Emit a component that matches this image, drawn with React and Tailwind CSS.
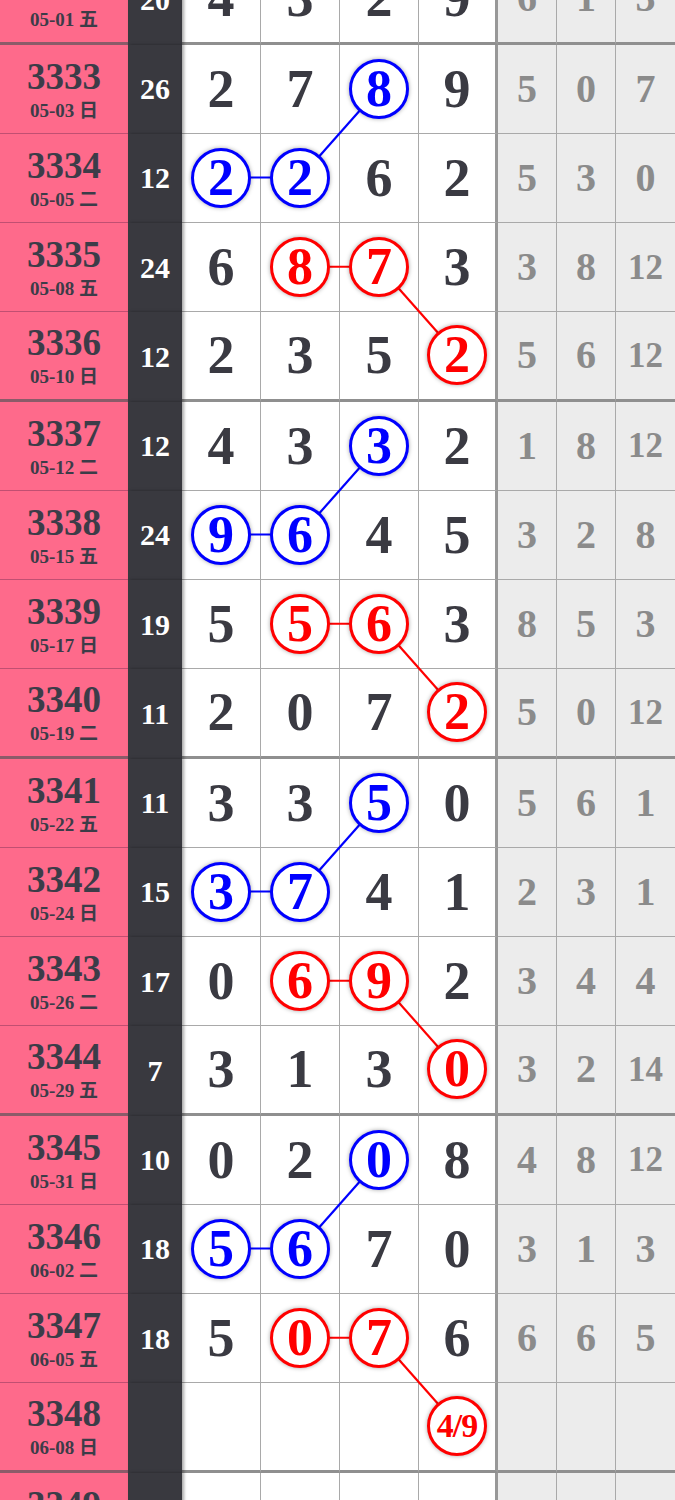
import React from 'react';

const SERIF = { fontFamily: '"Liberation Serif", "Noto Sans CJK SC", serif' };

const rows = [
  { n: 3332, d: '05-01 五', s: '20', v: ['4', '3', '2', '9'], g: ['6', '1', '3'] },
  { n: 3333, d: '05-03 日', s: '26', v: ['2', '7', '8', '9'], g: ['5', '0', '7'] },
  { n: 3334, d: '05-05 二', s: '12', v: ['2', '2', '6', '2'], g: ['5', '3', '0'] },
  { n: 3335, d: '05-08 五', s: '24', v: ['6', '8', '7', '3'], g: ['3', '8', '12'] },
  { n: 3336, d: '05-10 日', s: '12', v: ['2', '3', '5', '2'], g: ['5', '6', '12'] },
  { n: 3337, d: '05-12 二', s: '12', v: ['4', '3', '3', '2'], g: ['1', '8', '12'] },
  { n: 3338, d: '05-15 五', s: '24', v: ['9', '6', '4', '5'], g: ['3', '2', '8'] },
  { n: 3339, d: '05-17 日', s: '19', v: ['5', '5', '6', '3'], g: ['8', '5', '3'] },
  { n: 3340, d: '05-19 二', s: '11', v: ['2', '0', '7', '2'], g: ['5', '0', '12'] },
  { n: 3341, d: '05-22 五', s: '11', v: ['3', '3', '5', '0'], g: ['5', '6', '1'] },
  { n: 3342, d: '05-24 日', s: '15', v: ['3', '7', '4', '1'], g: ['2', '3', '1'] },
  { n: 3343, d: '05-26 二', s: '17', v: ['0', '6', '9', '2'], g: ['3', '4', '4'] },
  { n: 3344, d: '05-29 五', s: '7', v: ['3', '1', '3', '0'], g: ['3', '2', '14'] },
  { n: 3345, d: '05-31 日', s: '10', v: ['0', '2', '0', '8'], g: ['4', '8', '12'] },
  { n: 3346, d: '06-02 二', s: '18', v: ['5', '6', '7', '0'], g: ['3', '1', '3'] },
  { n: 3347, d: '06-05 五', s: '18', v: ['5', '0', '7', '6'], g: ['6', '6', '5'] },
  { n: 3348, d: '06-08 日', s: '', v: ['', '', '', '4/9'], g: ['', '', ''] },
  { n: 3349, d: '06-10 二', s: '', v: ['', '', '', ''], g: ['', '', ''] },
];

const ROW_H = 89.25;
const colX = (c) => 182 + 79 * c + 39.5;
const rowY = (k) => ROW_H * k + 44;

// which columns are circled, by position in the 4-row group
const circled = (n) => {
  if (n < 3333) return { cols: [], color: null };
  const p = (n - 3333) % 4;
  if (p === 0) return { cols: [2], color: 'blue' };
  if (p === 1) return { cols: [0, 1], color: 'blue' };
  if (p === 2) return { cols: [1, 2], color: 'red' };
  return { cols: [3], color: 'red' };
};

const lines = [];
rows.forEach((r, k) => {
  if (r.n < 3333 || r.n > 3348) return;
  const p = (r.n - 3333) % 4;
  if (p === 1) {
    lines.push({ x1: colX(0), y1: rowY(k), x2: colX(1), y2: rowY(k), c: '#0000ff' });
    lines.push({ x1: colX(1), y1: rowY(k), x2: colX(2), y2: rowY(k - 1), c: '#0000ff' });
  }
  if (p === 2) {
    lines.push({ x1: colX(1), y1: rowY(k), x2: colX(2), y2: rowY(k), c: '#ff0000' });
    lines.push({ x1: colX(2), y1: rowY(k), x2: colX(3), y2: rowY(k + 1), c: '#ff0000' });
  }
});

const Ball = ({ value, color }) => {
  const blue = color === 'blue';
  return (
    <div
      className={`relative z-10 w-[60px] h-[60px] rounded-full bg-white flex items-center justify-center border-[3px] shadow-[0_0_4px_rgba(0,0,0,0.35)] ${
        blue ? 'border-[#0000ff] text-[#0000ff]' : 'border-[#ff0000] text-[#ff0000]'
      }`}
    >
      <span
        className={`font-bold leading-none ${value.length > 1 ? 'text-[34px] tracking-[-1px]' : 'text-[52px]'}`}
      >
        {value}
      </span>
    </div>
  );
};

const Row = ({ r }) => {
  const groupEnd = (r.n - 3332) % 4 === 0;
  const line = groupEnd ? 'border-b-[3px] border-b-[#8f8f8f]' : 'border-b border-b-[#a9a9a9]';
  const pinkLine = groupEnd ? 'border-b-[3px] border-b-[#8b5b69]' : 'border-b border-b-[#c14f72]';
  const { cols, color } = circled(r.n);

  return (
    <div className="grid grid-cols-[128px_54px_79px_79px_79px_79px_59px_59px_59px] h-[89.25px]">
      <div className={`bg-[#fe6a8b] flex flex-col items-center justify-center gap-[6px] text-[#3c3c48] font-bold ${pinkLine}`}>
        <span className="text-[37px] leading-none">{r.n}</span>
        <span className="text-[19px] leading-none">{r.d}</span>
      </div>
      <div className="relative z-[1] bg-[#39393f] flex items-center justify-center text-white font-bold text-[30px] leading-none shadow-[2px_0_3px_rgba(0,0,0,0.35)]">
        {r.s}
      </div>
      {r.v.map((v, i) => (
        <div
          key={i}
          className={`bg-white flex items-center justify-center ${line} ${
            i === 3 ? 'border-r-[3px] border-r-[#989898]' : 'border-r border-r-[#a9a9a9]'
          }`}
        >
          {cols.includes(i) && v !== '' ? (
            <Ball value={v} color={color} />
          ) : (
            <span className="text-[54px] leading-none font-bold text-[#3a3a42]">{v}</span>
          )}
        </div>
      ))}
      {r.g.map((v, i) => (
        <div
          key={i}
          className={`bg-[#ececec] flex items-center justify-center ${line} ${
            i < 2 ? 'border-r border-r-[#a9a9a9]' : ''
          }`}
        >
          <span
            className={`leading-none font-bold text-[#8b8b8b] ${v.length > 1 ? 'text-[35px]' : 'text-[40px]'}`}
          >
            {v}
          </span>
        </div>
      ))}
    </div>
  );
}

export default function App() {
  return (
    <div className="w-[675px] h-[1500px] overflow-hidden bg-white" style={SERIF}>
      <div className="relative -mt-[44.75px]">
        {rows.map((r) => (
          <Row key={r.n} r={r} />
        ))}
        <svg
          className="absolute left-0 top-0 z-[5] pointer-events-none"
          width="675"
          height={ROW_H * rows.length}
        >
          {lines.map((l, i) => (
            <line key={i} x1={l.x1} y1={l.y1} x2={l.x2} y2={l.y2} stroke={l.c} strokeWidth="2.2" />
          ))}
        </svg>
      </div>
    </div>
  );
}
